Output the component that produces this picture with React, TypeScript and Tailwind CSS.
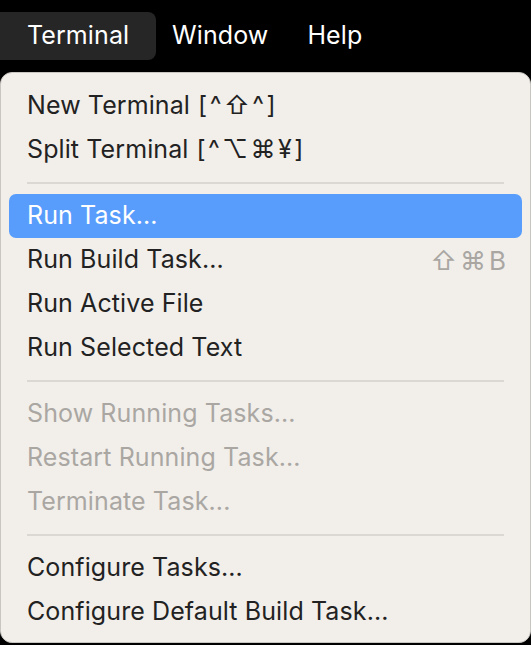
import React from "react";

type Item = { label: string; keys?: string; shortcut?: string; disabled?: boolean; active?: boolean };

const groups: Item[][] = [
  [
    { label: "New Terminal", keys: "[^⇧^]" },
    { label: "Split Terminal", keys: "[^⌥⌘¥]" },
  ],
  [
    { label: "Run Task...", active: true },
    { label: "Run Build Task...", shortcut: "⇧⌘B" },
    { label: "Run Active File" },
    { label: "Run Selected Text" },
  ],
  [
    { label: "Show Running Tasks...", disabled: true },
    { label: "Restart Running Task...", disabled: true },
    { label: "Terminate Task...", disabled: true },
  ],
  [{ label: "Configure Tasks..." }, { label: "Configure Default Build Task..." }],
];

function Row({ item }: { item: Item }) {
  const color = item.active ? "text-white bg-[#589dfb]" : item.disabled ? "text-[#aaa7a3]" : "text-[#222]";
  return (
    <div className={`mx-2 h-[44px] rounded-[7px] pl-[18px] pr-[13px] flex items-center justify-between ${color}`}>
      <span>
        {item.label}
        {item.keys && <span className="ml-[8px] tracking-[2.5px]">{item.keys}</span>}
      </span>
      {item.shortcut && <span className="text-[#aaa7a3] text-[26px] tracking-[3px]">{item.shortcut}</span>}
    </div>
  );
}

export default function App() {
  return (
    <div className="w-[531px] h-[645px] bg-black overflow-hidden text-[25px] tracking-[0.1px] font-['Inter','DejaVu_Sans',sans-serif]">
      <div className="h-[72px] flex items-start pt-[12px] text-white">
        <div className="h-[48px] w-[156px] rounded-r-[8px] bg-[#262626] pl-[27px] flex items-center">Terminal</div>
        <div className="h-[48px] pl-[16px] flex items-center">Window</div>
        <div className="h-[48px] pl-[39px] flex items-center">Help</div>
      </div>
      <div className="h-[571px] bg-[#f2efeb] rounded-[12px] border border-[#c9c6c2] pt-[11px]">
        {groups.map((g, gi) => (
          <div key={gi}>
            {gi > 0 && <div className="mx-[26px] my-[10px] h-[2px] bg-[#dbd8d4]" />}
            {g.map((it) => (
              <Row key={it.label} item={it} />
            ))}
          </div>
        ))}
      </div>
    </div>
  );
}
